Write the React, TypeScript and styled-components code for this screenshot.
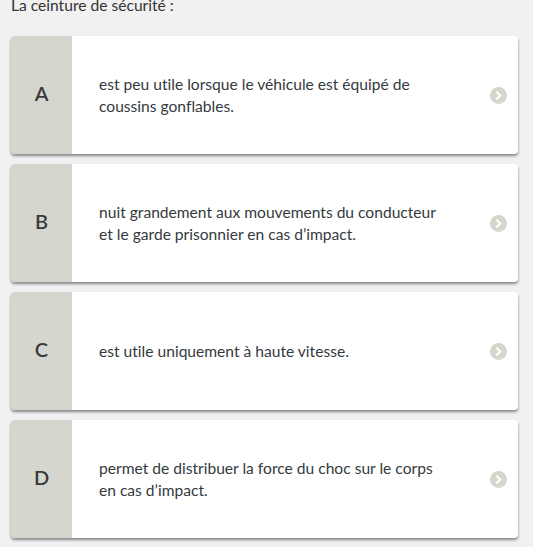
import React from "react";
import styled, { createGlobalStyle } from "styled-components";

const Global = createGlobalStyle`
  html, body { margin: 0; padding: 0; background: #ffffff; }
  body {
    font-family: Lato, "Open Sans", sans-serif;
    color: #333;
    font-variant-ligatures: none;
  }
`;

const Page = styled.div`
  background: #f1f1f1;
  height: 547px;
  overflow: hidden;
  padding: 0 15px 0 11px;
  box-sizing: border-box;
`;

const Title = styled.div`
  font-size: 15.6px;
  line-height: 20px;
  margin-top: -5px;
  color: #333;
  margin-bottom: 21px;
`;

const List = styled.div`
  display: flex;
  flex-direction: column;
  gap: 10px;
`;

const Card = styled.div`
  display: flex;
  height: 118px;
  background: #fff;
  border-radius: 4px;
  overflow: hidden;
  box-shadow: 0 2px 3px rgba(0, 0, 0, 0.45);
`;

const Letter = styled.div`
  width: 61px;
  flex: none;
  background: #d5d7ce;
  display: flex;
  align-items: center;
  justify-content: center;
  padding-bottom: 4px;
  box-sizing: border-box;
  font-size: 20px;
  font-weight: 600;
  color: #3a3a3a;
`;

const Text = styled.div`
  width: 346px;
  padding-left: 27px;
  display: flex;
  align-items: center;
  font-size: 15.6px;
  line-height: 22px;
  color: #343a40;
`;

const Arrow = styled.div`
  margin-left: auto;
  margin-right: 11px;
  display: flex;
  align-items: center;
`;

const Chevron = () => (
  <svg width="17" height="17" viewBox="0 0 17 17">
    <circle cx="8.5" cy="8.5" r="8.5" fill="#d5d7ce" />
    <path d="M7 5.2 L10.2 8.5 L7 11.8" fill="none" stroke="#fff" strokeWidth="2.2" strokeLinecap="round" strokeLinejoin="round" />
  </svg>
);

const options = [
  ["A", "est peu utile lorsque le véhicule est équipé de coussins gonflables."],
  ["B", "nuit grandement aux mouvements du conducteur et le garde prisonnier en cas d’impact."],
  ["C", "est utile uniquement à haute vitesse."],
  ["D", "permet de distribuer la force du choc sur le corps en cas d’impact."],
];

export default function App() {
  return (
    <>
      <Global />
      <Page>
        <Title>La ceinture de sécurité :</Title>
        <List>
          {options.map(([l, t]) => (
            <Card key={l}>
              <Letter>{l}</Letter>
              <Text>{t}</Text>
              <Arrow>
                <Chevron />
              </Arrow>
            </Card>
          ))}
        </List>
      </Page>
    </>
  );
}
